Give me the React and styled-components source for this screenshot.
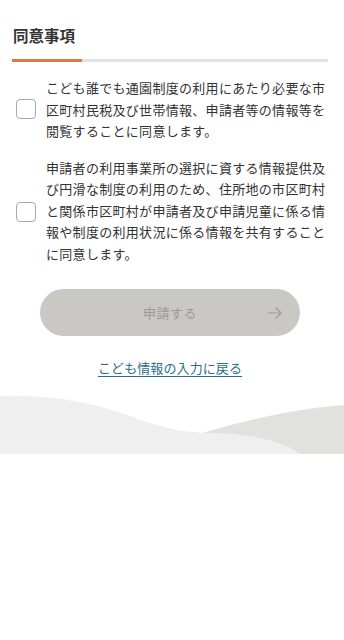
import React from 'react'
import styled, { createGlobalStyle } from 'styled-components'

const GlobalStyle = createGlobalStyle`
  html, body {
    margin: 0;
    padding: 0;
    background: #fff;
  }
  body {
    font-family: "Noto Sans CJK JP", "Noto Sans", sans-serif;
    color: #333;
  }
`

const Page = styled.div`
  width: 344px;
  min-height: 640px;
  background: #fff;
  display: flex;
  flex-direction: column;
`

const Content = styled.div`
  padding: 24px 16px 0 12px;
  display: flex;
  flex-direction: column;
`

const Title = styled.h2`
  margin: 0;
  font-size: 15.5px;
  line-height: 23px;
  font-weight: 700;
  color: #333;
  padding-left: 1px;
`

const Progress = styled.div`
  margin-top: 12px;
  height: 3px;
  background: #e2e2e2;
  overflow: hidden;
`

const ProgressFill = styled.div`
  height: 100%;
  width: ${({ $value }) => $value}px;
  background: #d87a47;
`

const Agreements = styled.div`
  margin-top: 15px;
  display: flex;
  flex-direction: column;
  gap: 15px;
`

const AgreeRow = styled.label`
  display: flex;
  align-items: center;
  gap: 10px;
  padding-left: 4px;
  cursor: pointer;
`

const Box = styled.span`
  flex: 0 0 auto;
  width: 20px;
  height: 20px;
  box-sizing: border-box;
  border: 1px solid #a9a9a9;
  border-radius: 4px;
  background: #fff;
  margin-top: ${({ $shift }) => $shift || 0}px;
`

const AgreeText = styled.p`
  margin: 0;
  font-size: 13px;
  line-height: 21.5px;
  letter-spacing: 0.3px;
  color: #333;
`

const Actions = styled.div`
  margin-top: 25px;
  display: flex;
  flex-direction: column;
  align-items: center;
`

const SubmitButton = styled.button`
  position: relative;
  width: 260px;
  height: 47px;
  border: none;
  border-radius: 24px;
  background: #c9c8c5;
  color: #9b9a98;
  font-family: inherit;
  font-size: 13px;
  letter-spacing: 0.5px;
  display: flex;
  align-items: center;
  justify-content: center;
  cursor: not-allowed;
`

const Arrow = styled.span`
  position: absolute;
  right: 18px;
  top: 50%;
  transform: translateY(-50%);
  display: flex;
`

const BackLink = styled.a`
  margin-top: 22px;
  font-size: 13px;
  line-height: 20px;
  letter-spacing: 0.1px;
  color: #2c6d89;
  text-decoration: underline;
  text-underline-offset: 3px;
  cursor: pointer;
`

const Wave = styled.div`
  margin-top: 16px;
  height: 60px;
  display: flex;
  svg {
    display: block;
  }
`

const agreements = [
  {
    id: 'a1',
    text: 'こども誰でも通園制度の利用にあたり必要な市区町村民税及び世帯情報、申請者等の情報等を閲覧することに同意します。'
  },
  {
    id: 'a2',
    text: '申請者の利用事業所の選択に資する情報提供及び円滑な制度の利用のため、住所地の市区町村と関係市区町村が申請者及び申請児童に係る情報や制度の利用状況に係る情報を共有することに同意します。',
    shift: 4
  }
]

export default function App() {
  return (
    <>
      <GlobalStyle />
      <Page>
        <Content>
          <Title>同意事項</Title>
          <Progress>
            <ProgressFill $value={70} />
          </Progress>
          <Agreements>
            {agreements.map(a => (
              <AgreeRow key={a.id}>
                <Box $shift={a.shift} />
                <AgreeText>{a.text}</AgreeText>
              </AgreeRow>
            ))}
          </Agreements>
          <Actions>
            <SubmitButton disabled>
              申請する
              <Arrow>
                <svg width="15" height="12" viewBox="0 0 15 12" fill="none" stroke="#9b9a98" strokeWidth="1.2" strokeLinecap="round" strokeLinejoin="round">
                  <path d="M1 6h13M9 1l5 5-5 5" />
                </svg>
              </Arrow>
            </SubmitButton>
            <BackLink>こども情報の入力に戻る</BackLink>
          </Actions>
        </Content>
        <Wave>
          <svg width="344" height="60" viewBox="0 0 344 60" preserveAspectRatio="none">
            <path d="M190 60 L203 39 C240 28 290 15 344 11 L344 60 Z" fill="#e1e1e0" />
            <path d="M0 2 C50 0 90 8 130 22 C165 35 185 39 215 39 C255 40 285 48 300 60 L0 60 Z" fill="#efefef" />
          </svg>
        </Wave>
      </Page>
    </>
  )
}
